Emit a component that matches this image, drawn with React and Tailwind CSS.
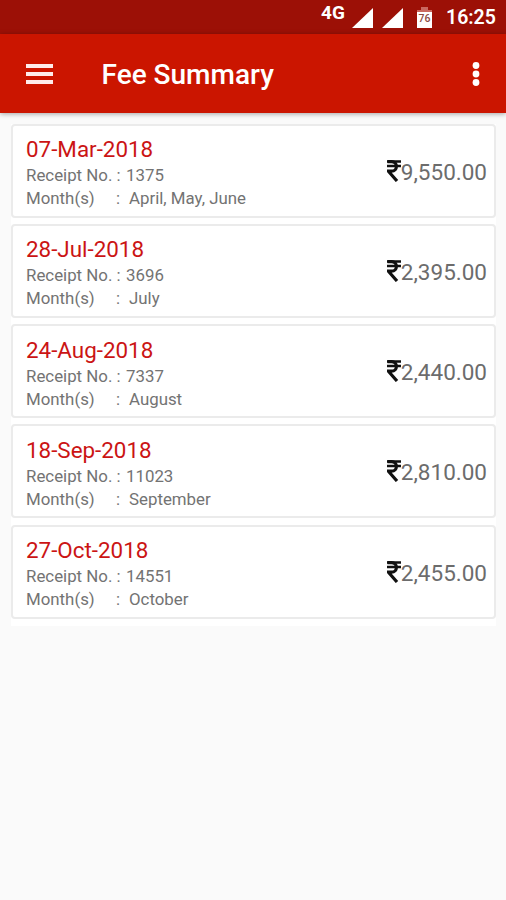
const receipts = [
  { date: '07-Mar-2018', no: '1375', months: 'April, May, June', amount: '9,550.00' },
  { date: '28-Jul-2018', no: '3696', months: 'July', amount: '2,395.00' },
  { date: '24-Aug-2018', no: '7337', months: 'August', amount: '2,440.00' },
  { date: '18-Sep-2018', no: '11023', months: 'September', amount: '2,810.00' },
  { date: '27-Oct-2018', no: '14551', months: 'October', amount: '2,455.00' },
];

function Signal({ className }) {
  return (
    <svg className={className} width="21" height="20" viewBox="0 0 21 20" fill="#fff">
      <path d="M21 0V20H0Z" />
    </svg>
  );
}

function Rupee() {
  return (
    <svg width="14" height="22" viewBox="0 0 14 22" fill="none" stroke="#111" className="shrink-0">
      <path d="M0 1.4H14M0 6H14" strokeWidth="2.5" />
      <path d="M0.5 1.6H4.5C11 1.6 11 11.2 4.5 11.2H1.4L10 21" strokeWidth="3.2" />
    </svg>
  );
}

function StatusBar() {
  return (
    <div className="flex h-[34px] items-start bg-[#9c1006] text-white">
      <span className="ml-[321px] mt-[3px] w-[25px] text-[19px] font-bold leading-[20px]">4G</span>
      <Signal className="ml-[6px] mt-[8px]" />
      <Signal className="ml-[9px] mt-[8px]" />
      <svg className="ml-[14px] mt-[7px]" width="15" height="21" viewBox="0 0 15 21">
        <path d="M4 0H11V3H15V8H0V3H4Z" fill="#c9685f" />
        <path d="M0 5H15V21H0Z" fill="#fff" />
        <text x="7.5" y="14.5" textAnchor="middle" fontFamily="Roboto, sans-serif" fontSize="10.5" fontWeight="500" fill="#8c4a44">76</text>
      </svg>
      <span className="ml-[14px] mt-[6px] whitespace-nowrap text-[19.5px] font-semibold leading-[24px]">16:25</span>
    </div>
  );
}

function AppBar() {
  return (
    <header className="relative flex h-[79px] items-center bg-[#cb1500] text-white shadow-[0_1px_5px_rgba(0,0,0,0.35)]">
      <svg className="ml-[26px]" width="27" height="20" viewBox="0 0 27 20" fill="#ffeceb">
        <path d="M0 0H27V4H0ZM0 8H27V12H0ZM0 16H27V20H0Z" />
      </svg>
      <h1 className="ml-[48.5px] mt-[2px] whitespace-nowrap text-[28px] font-medium leading-[32px]">Fee Summary</h1>
      <svg className="ml-auto mr-[26px]" width="8" height="24" viewBox="0 0 8 24" fill="#fff">
        <circle cx="4" cy="3.5" r="3.4" />
        <circle cx="4" cy="12" r="3.4" />
        <circle cx="4" cy="20.5" r="3.4" />
      </svg>
    </header>
  );
}

function Receipt({ item }) {
  return (
    <li className="flex h-[94px] items-center justify-between rounded-[4px] border-2 border-[#ebebeb] bg-white pl-[13px] pr-[7px]">
      <div className="whitespace-nowrap pt-[4px] text-[16.85px] leading-[23px] text-[#737373]">
        <p className="text-[22.4px] leading-[29px] text-[#cb1414]">{item.date}</p>
        <p className="flex">
          <span className="w-[100px]">Receipt No. :</span>
          <span>{item.no}</span>
        </p>
        <p className="flex">
          <span className="w-[90px]">Month(s)</span>
          <span className="w-[13px]">:</span>
          <span>{item.months}</span>
        </p>
      </div>
      <div className="flex items-center text-[22.5px] leading-[28px] text-[#6c6c6c]">
        <Rupee />
        <span className="pt-[2px]">{item.amount}</span>
      </div>
    </li>
  );
}

export default function App() {
  return (
    <div className="h-[900px] w-[506px] overflow-hidden bg-[#fafafa] font-['Roboto',sans-serif]">
      <StatusBar />
      <AppBar />
      <ul className="ml-[11px] mt-[10.5px] flex w-[485px] flex-col gap-[6.3px] bg-white pb-[7px]">
        {receipts.map((item) => (
          <Receipt key={item.no} item={item} />
        ))}
      </ul>
    </div>
  );
}
